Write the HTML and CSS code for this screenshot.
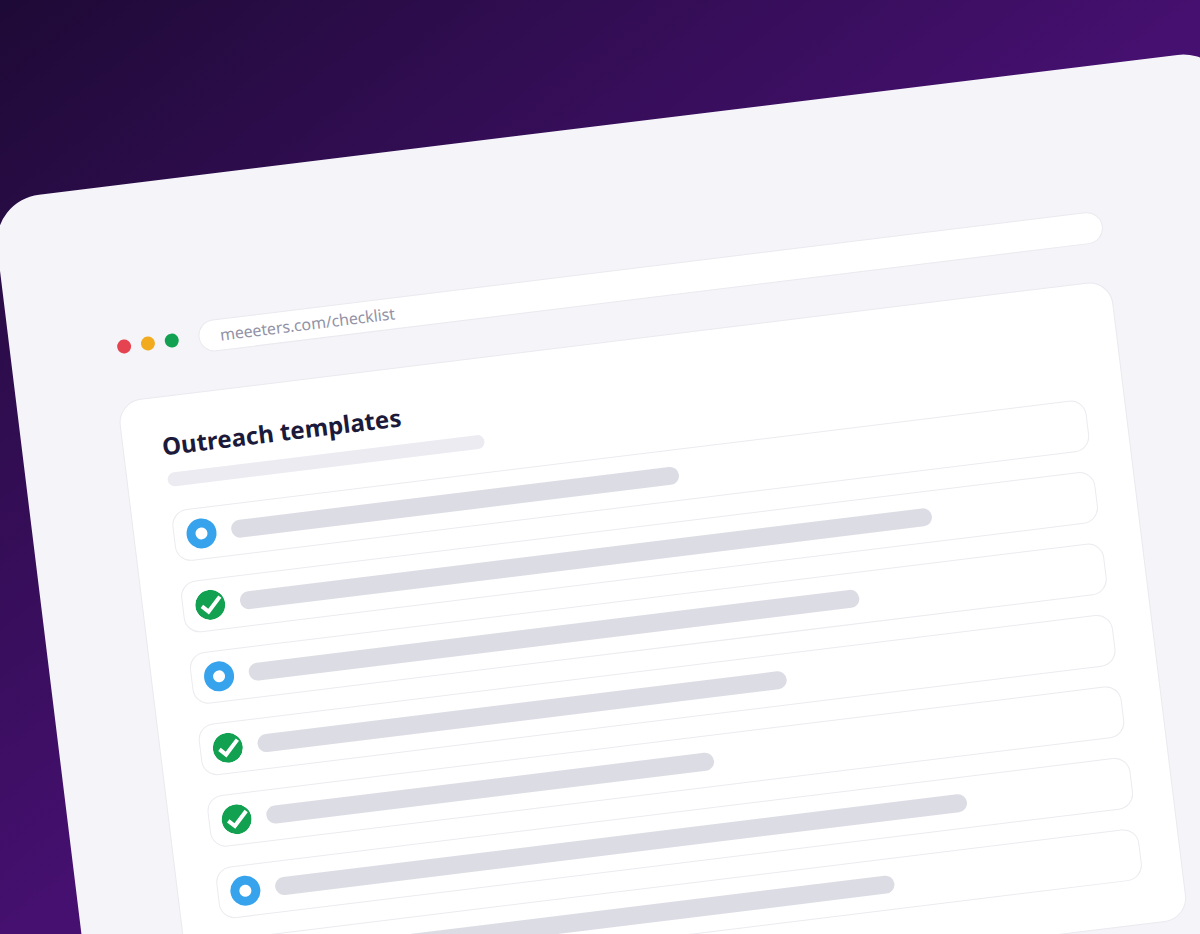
FILE: index.html
```html
<!DOCTYPE html>
<html lang="en">
<head>
<meta charset="utf-8">
<title>Outreach templates</title>
<link rel="stylesheet" href="styles.css">
</head>
<body>
<main class="stage">
  <section class="window">
    <header class="toolbar">
      <div class="dots">
        <span class="dot dot-red"></span>
        <span class="dot dot-amber"></span>
        <span class="dot dot-green"></span>
      </div>
      <div class="address">meeeters.com/checklist</div>
    </header>
    <div class="card">
      <h1 class="title">Outreach templates</h1>
      <div class="subtitle-bar"></div>
      <ul class="rows">
        <li class="row"><span class="status status-open"></span><span class="track"><span class="bar" style="width:55%"></span></span></li>
        <li class="row"><svg class="status-check" viewBox="0 0 30 30"><circle cx="15" cy="15" r="15" fill="#12a150"/><path d="M6.5 15.5l6 6L25.5 8" fill="none" stroke="#fff" stroke-width="4"/></svg><span class="track"><span class="bar" style="width:85%"></span></span></li>
        <li class="row"><span class="status status-open"></span><span class="track"><span class="bar" style="width:75%"></span></span></li>
        <li class="row"><svg class="status-check" viewBox="0 0 30 30"><circle cx="15" cy="15" r="15" fill="#12a150"/><path d="M6.5 15.5l6 6L25.5 8" fill="none" stroke="#fff" stroke-width="4"/></svg><span class="track"><span class="bar" style="width:65%"></span></span></li>
        <li class="row"><svg class="status-check" viewBox="0 0 30 30"><circle cx="15" cy="15" r="15" fill="#12a150"/><path d="M6.5 15.5l6 6L25.5 8" fill="none" stroke="#fff" stroke-width="4"/></svg><span class="track"><span class="bar" style="width:55%"></span></span></li>
        <li class="row"><span class="status status-open"></span><span class="track"><span class="bar" style="width:85%"></span></span></li>
        <li class="row"><span class="status status-open"></span><span class="track"><span class="bar" style="width:75%"></span></span></li>
      </ul>
    </div>
  </section>
</main>
</body>
</html>
```
FILE: styles.css
```css
* { box-sizing: border-box; }
html, body { margin: 0; padding: 0; height: 100%; }
body { overflow: hidden; font-family: "Noto Sans", "Open Sans", sans-serif; }
.stage {
  position: relative;
  width: 1200px;
  height: 934px;
  overflow: hidden;
  background: linear-gradient(to bottom right, #1e0a36 0%, #45106f 50%);
}
.window {
  position: absolute;
  left: -33px;
  top: 198px;
  width: 1243px;
  height: 1000px;
  padding: 145px 0 0 99.5px;
  background: #f4f4f9;
  border-radius: 48px;
  transform-origin: 33px -198px;
  transform: rotate(-7deg);
}
.toolbar {
  display: flex;
  align-items: center;
  gap: 20px;
  width: 993px;
  height: 32px;
  margin-left: 7px;
}
.dots { display: flex; gap: 10px; }
.dot { width: 14px; height: 14px; border-radius: 50%; }
.dot-red { background: #e5434f; }
.dot-amber { background: #f2ab1e; }
.dot-green { background: #12a150; }
.address {
  flex: 1;
  height: 32px;
  padding-left: 21px;
  border: 1px solid #e9e9ef;
  border-radius: 16px;
  background: #fff;
  color: #9292a6;
  font-size: 16px;
  letter-spacing: -0.1px;
  line-height: 30px;
}
.card {
  width: 1001px;
  height: 644px;
  margin-top: 38px;
  padding: 33.5px 39px 0;
  border: 1px solid #e9e9ef;
  border-radius: 24px;
  background: #fff;
}
.title {
  margin: 0;
  color: #1b1a3a;
  font-size: 24px;
  font-weight: 700;
  letter-spacing: 0.05px;
  line-height: 30px;
}
.subtitle-bar {
  width: 319px;
  height: 14px;
  margin: 12px 0 0 1px;
  border-radius: 7px;
  background: #ebebf1;
}
.rows {
  display: flex;
  flex-direction: column;
  gap: 20px;
  margin: 24px 0 0;
  padding: 0;
  list-style: none;
}
.row {
  display: flex;
  align-items: center;
  gap: 15px;
  height: 52px;
  padding: 0 42px 0 12px;
  border: 1px solid #ebebf0;
  border-radius: 16px;
  background: #fff;
}
.status, .status-check { flex: none; width: 30px; height: 30px; border-radius: 50%; }
.status-open { border: 9px solid #36a3ec; background: #fff; }
.track { flex: 1; display: block; }
.bar { display: block; height: 18px; border-radius: 9px; background: #dcdce4; }
```
